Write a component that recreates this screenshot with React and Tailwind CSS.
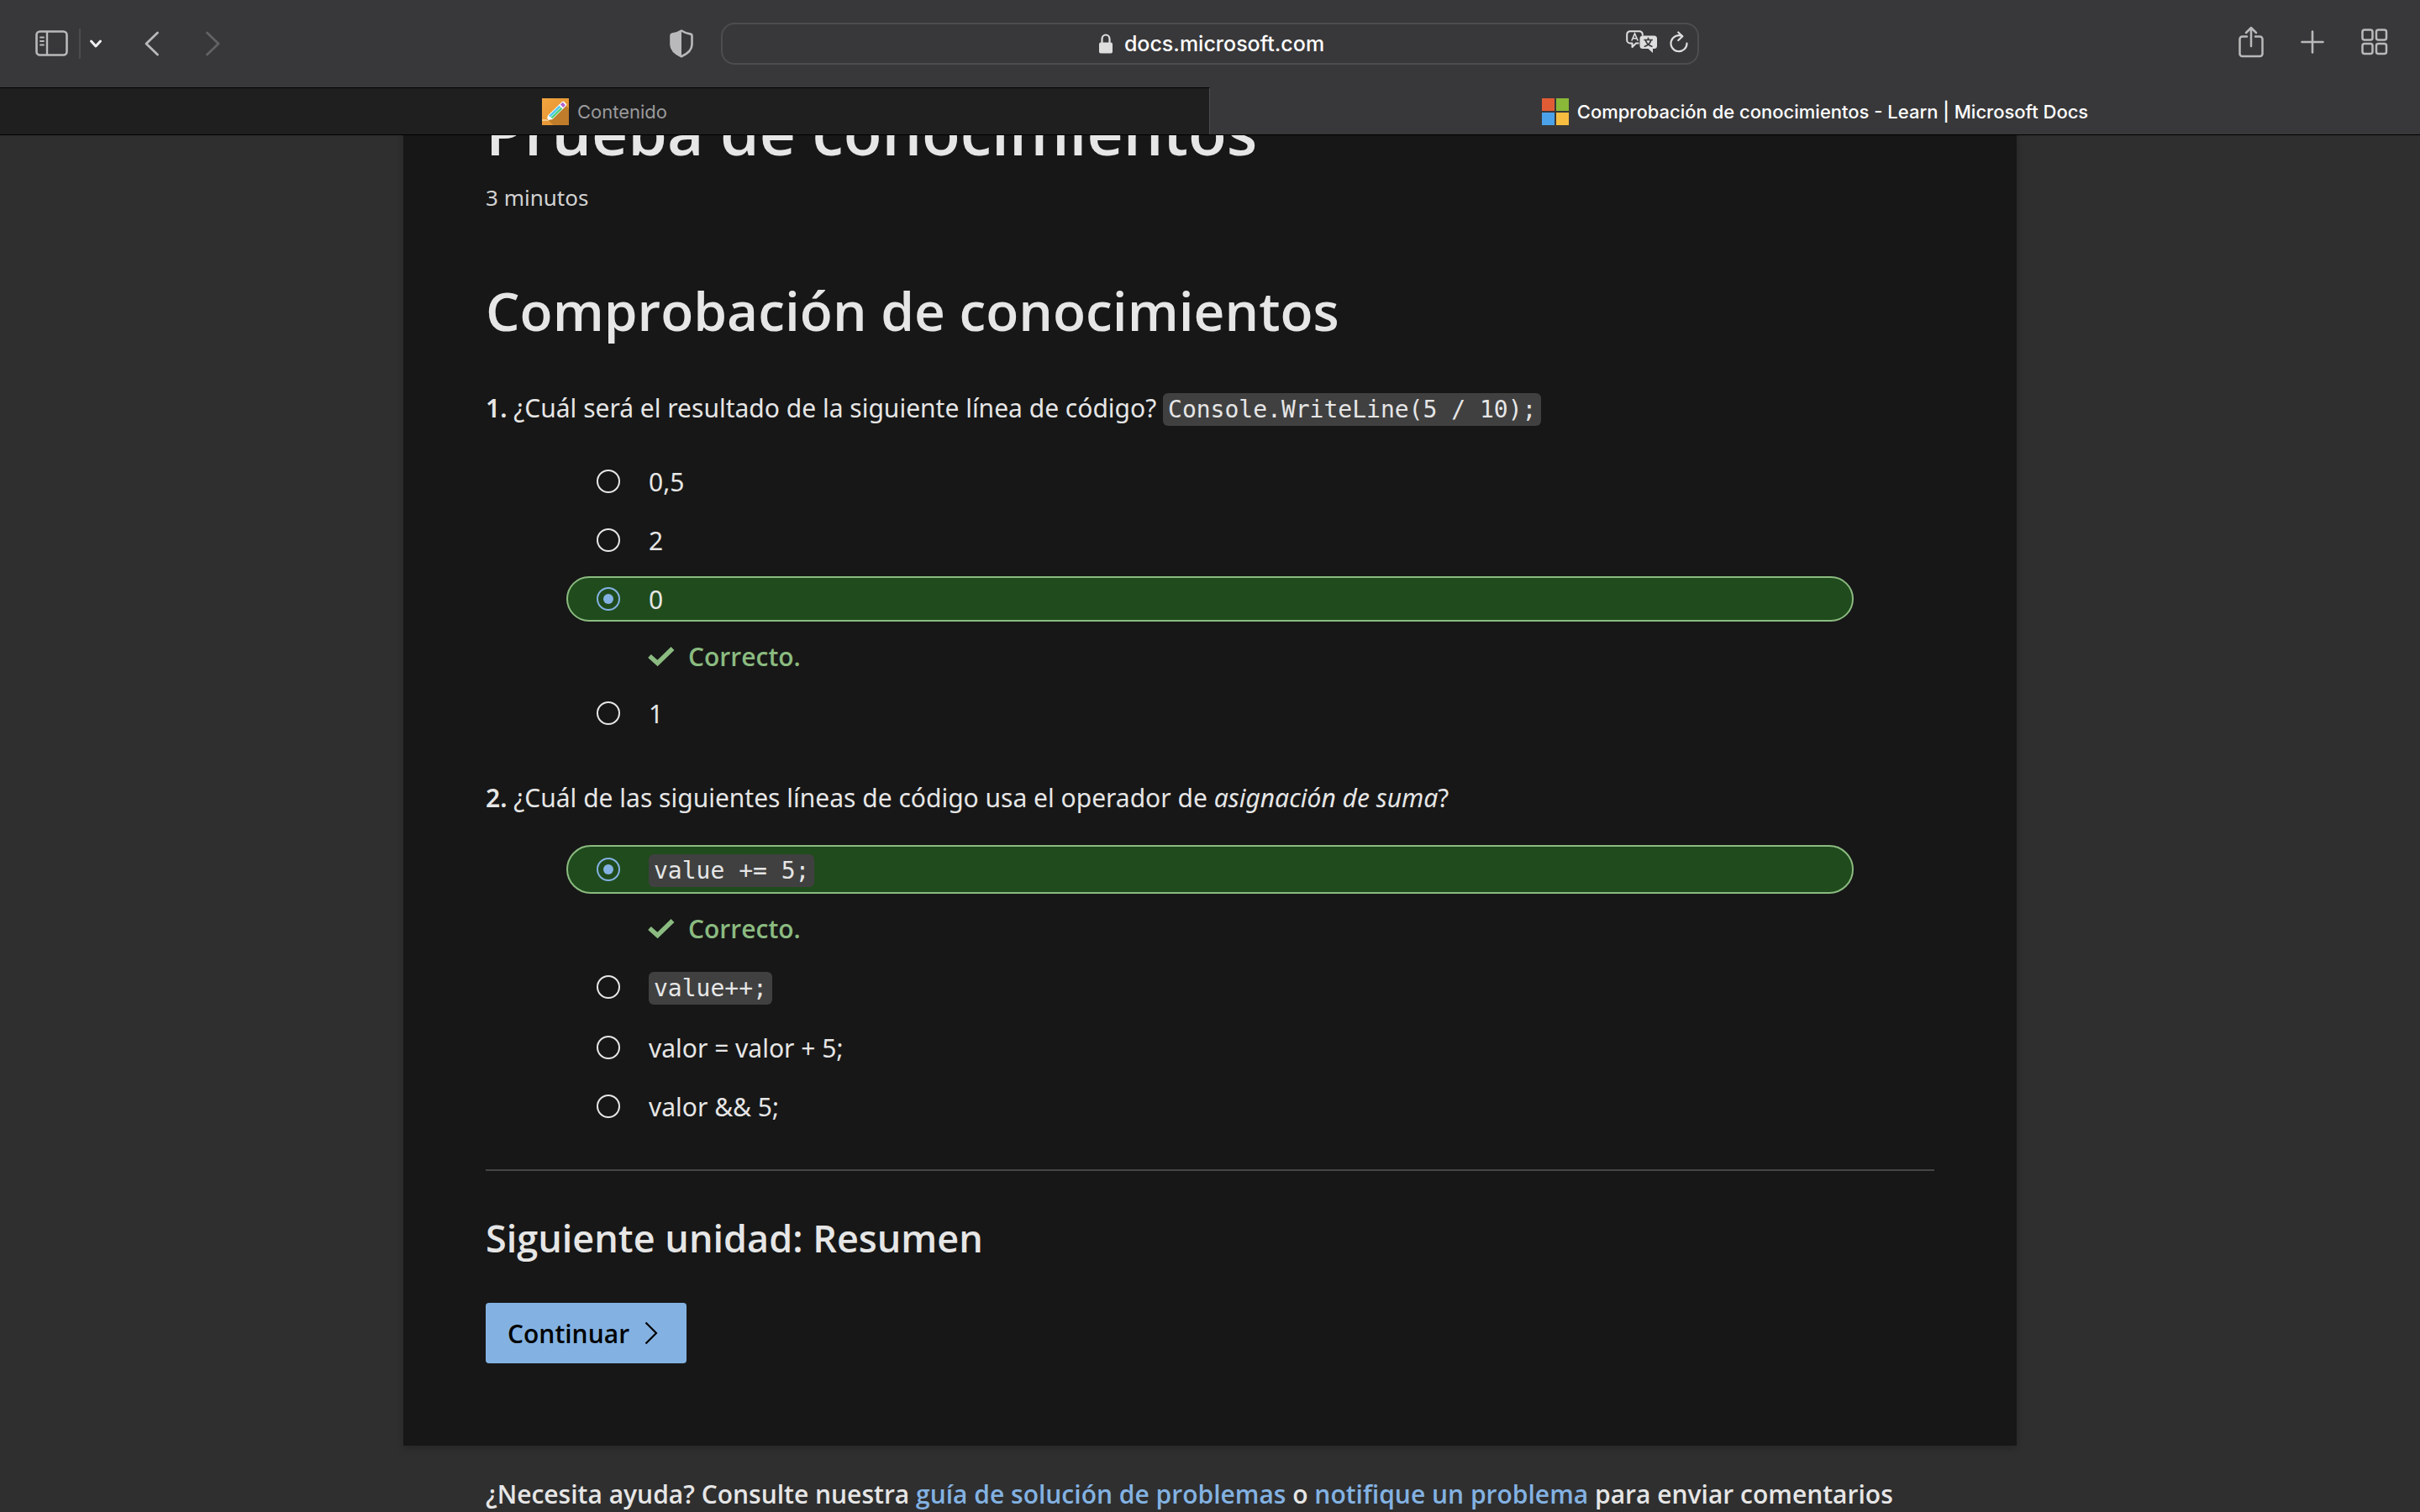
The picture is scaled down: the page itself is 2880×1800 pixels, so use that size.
import React from "react";

const SidebarIcon = () => (
  <svg width="40" height="32" viewBox="0 0 40 32" fill="none" stroke="#b9b9bb" strokeLinecap="round">
    <rect x="1.5" y="1.5" width="36" height="28" rx="4" strokeWidth="2.6" />
    <path d="M14 2v27" strokeWidth="2.4" />
    <path d="M6 8.5h4M6 13h4M6 17.5h4" strokeWidth="1.8" />
  </svg>
);

const SmallChevron = () => (
  <svg width="16" height="12" viewBox="0 0 16 12" fill="none" stroke="#f0f0f0" strokeWidth="3" strokeLinecap="round" strokeLinejoin="round">
    <path d="M2.5 3l5.500 6l5.500 -6" />
  </svg>
);

const BackIcon = () => (
  <svg width="18" height="30" viewBox="0 0 18 30" fill="none" stroke="#b9b9bb" strokeWidth="2.8" strokeLinecap="round" strokeLinejoin="round">
    <path d="M15.500 2L2 15l13.500 13" />
  </svg>
);

const ForwardIcon = () => (
  <svg width="18" height="30" viewBox="0 0 18 30" fill="none" stroke="#626264" strokeWidth="2.8" strokeLinecap="round" strokeLinejoin="round">
    <path d="M2.500 2L16 15L2.500 28" />
  </svg>
);

const ShieldIcon = () => (
  <svg width="28" height="34" viewBox="0 0 28 34">
    <path d="M14 1.500C17 3.500 21 5 25 5.600Q26.500 6 26.500 7.500V18C26.500 25 20 29.500 14 32.300C8 29.500 1.500 25 1.500 18V7.500Q1.500 6 3 5.600C7 5 11 3.500 14 1.500Z" fill="none" stroke="#b9b9bb" strokeWidth="2.6" strokeLinejoin="round" />
    <path d="M14 1.500V32.300C8 29.500 1.500 25 1.500 18V7.500Q1.500 6 3 5.600C7 5 11 3.500 14 1.500Z" fill="#b9b9bb" />
  </svg>
);

const LockIcon = () => (
  <svg width="16" height="24" viewBox="0 0 16 24">
    <path d="M3.500 11V6.500a4.500 5 0 0 1 9 0V11" fill="none" stroke="#dededf" strokeWidth="2.200" />
    <rect x="0" y="10.500" width="16" height="13" rx="2" fill="#dededf" />
  </svg>
);

const TranslateIcon = () => (
  <svg width="38" height="28" viewBox="0 0 38 28" fill="none">
    <path d="M15.500 15.500H12L7.500 20V15.500H5A3.800 3.800 0 0 1 1.200 11.700V5A3.800 3.800 0 0 1 5 1.200H16A3.800 3.800 0 0 1 19.800 5V6.500" stroke="#dededf" strokeWidth="2" strokeLinejoin="round" />
    <path d="M6.800 12.500L10.500 4L14.200 12.500M8 9.800H13" stroke="#dededf" strokeWidth="1.600" />
    <path d="M20 6.500H33.500A3.500 3.500 0 0 1 37 10V18.500A3.500 3.500 0 0 1 33.500 22H32V27L26.500 22H20A3.500 3.500 0 0 1 16.500 18.500V10A3.500 3.500 0 0 1 20 6.500Z" fill="#dededf" />
    <path d="M26.500 8.800V11.300M21.300 11.500H31.900M23.300 11.800C24.300 15.500 27.500 18.300 31.500 19.500M29.900 11.800C28.900 15.500 25.700 18.300 21.700 19.500" stroke="#38383a" strokeWidth="1.700" />
  </svg>
);

const ReloadIcon = () => (
  <svg width="22" height="26" viewBox="0 0 22 26" fill="none" stroke="#dededf" strokeWidth="2.200" strokeLinecap="round" strokeLinejoin="round">
    <path d="M20.500 14.500A9.500 9.500 0 1 1 15 6" />
    <path d="M10.300 1.500L15.300 6.200L10.300 11" />
  </svg>
);

const ShareIcon = () => (
  <svg width="30" height="38" viewBox="0 0 30 38" fill="none" stroke="#b9b9bb" strokeWidth="2.500" strokeLinecap="round" strokeLinejoin="round">
    <path d="M10 12.500H4.500A3 3 0 0 0 1.500 15.500V33A3 3 0 0 0 4.500 36H25.500A3 3 0 0 0 28.500 33V15.500A3 3 0 0 0 25.500 12.500H20" />
    <path d="M15 24V2M9 8L15 2L21 8" />
  </svg>
);

const PlusIcon = () => (
  <svg width="28" height="28" viewBox="0 0 28 28" stroke="#b9b9bb" strokeWidth="2.600" strokeLinecap="round">
    <path d="M14 1.500V26.500M1.500 14H26.500" />
  </svg>
);

const GridIcon = () => (
  <svg width="32" height="32" viewBox="0 0 32 32" fill="none" stroke="#b9b9bb" strokeWidth="2.500">
    <rect x="1.500" y="1.500" width="12" height="12" rx="2.500" />
    <rect x="18" y="1.500" width="12" height="12" rx="2.500" />
    <rect x="1.500" y="18" width="12" height="12" rx="2.500" />
    <rect x="18" y="18" width="12" height="12" rx="2.500" />
  </svg>
);

const PencilFavicon = () => (
  <svg width="32" height="32" viewBox="0 0 32 32">
    <defs>
      <linearGradient id="pencil-bg" x1="0" y1="0" x2="1" y2="1">
        <stop offset="0" stopColor="#f4a540" />
        <stop offset="1" stopColor="#dd8f2e" />
      </linearGradient>
    </defs>
    <rect width="32" height="32" fill="url(#pencil-bg)" />
    <path d="M28.500 9L32 12.500V32H13.500L7 25.500Z" fill="#bf7c2a" />
    <path d="M0 26H8" stroke="#fbd9a4" strokeWidth="1.500" />
    <path d="M24 4Q25 3 26.200 4L28.800 6.600Q29.800 8 28.800 9L12.500 25L5.500 26.500L7 20.500Z" fill="#fff" />
    <path d="M21.800 7.500L24.800 4.800L28 8.200L25.300 11Z" fill="#b265cf" />
    <path d="M20.500 8.500L22.400 10.400L10 22.500L8 20.700Z" fill="#54c8f0" />
    <path d="M22.700 10.700L24.400 12.400L12.300 24.200L10.400 22.800Z" fill="#4fcf78" />
    <path d="M6.200 24.300L7.800 25.600L5.500 26.500Z" fill="#d98a2b" />
  </svg>
);

const MicrosoftFavicon = () => (
  <svg width="32" height="32" viewBox="0 0 32 32">
    <rect width="15" height="15" fill="#e15c35" />
    <rect x="17" width="15" height="15" fill="#8ab838" />
    <rect y="17" width="15" height="15" fill="#4ca2ea" />
    <rect x="17" y="17" width="15" height="15" fill="#f6bd41" />
  </svg>
);

const CheckIcon = () => (
  <svg width="32" height="24" viewBox="0 0 32 24" fill="none" stroke="#8bbb80" strokeWidth="5.500">
    <path d="M2 11L11.500 19.500L29.500 2" />
  </svg>
);

const Code = ({ children }) => (
  <code className="rounded-md bg-[#404040] px-1.5 py-[3px] font-['DejaVu_Sans_Mono',monospace] text-[28px] text-[#e6e6e6]">{children}</code>
);

const questions = [
  {
    id: "q1",
    number: "1.",
    tall: true,
    text: (
      <>
        ¿Cuál será el resultado de la siguiente línea de código? <Code>Console.WriteLine(5 / 10);</Code>
      </>
    ),
    options: [{ text: "0,5" }, { text: "2" }, { text: "0", correct: true }, { text: "1" }],
  },
  {
    id: "q2",
    number: "2.",
    text: (
      <>
        ¿Cuál de las siguientes líneas de código usa el operador de <em>asignación de suma</em>?
      </>
    ),
    options: [
      { text: "value += 5;", code: true, correct: true },
      { text: "value++;", code: true },
      { text: "valor = valor + 5;" },
      { text: "valor && 5;" },
    ],
  },
];

function Option({ group, option }) {
  const tone = option.correct ? "border-[#8bbb80] bg-[#204b1d]" : "border-transparent";
  const height = option.code ? "min-h-[58px]" : "min-h-[54px]";
  return (
    <div>
      <label className={`flex items-center gap-[34px] rounded-full border-2 pl-[34px] ${tone} ${height}`}>
        <input
          type="radio"
          name={group}
          defaultChecked={option.correct}
          className="grid size-7 shrink-0 appearance-none place-items-center rounded-full border-2 border-[#e6e6e6] before:size-3 before:rounded-full checked:border-[#83b2e2] checked:before:bg-[#83b2e2]"
        />
        <span className="pt-0.5 leading-10">{option.code ? <Code>{option.text}</Code> : option.text}</span>
      </label>
      {option.correct && (
        <p className="mt-[18px] flex items-center gap-4 pl-[97px] font-['Open_Sans',sans-serif] font-semibold leading-[48px] text-[#8bbb80]">
          <CheckIcon />
          Correcto.
        </p>
      )}
    </div>
  );
}

function Toolbar() {
  return (
    <div className="grid h-[104px] grid-cols-[1fr_minmax(0,1164px)_1fr] items-center">
      <div className="flex items-center pl-[42px] pr-[33px]">
        <button aria-label="Barra lateral"><SidebarIcon /></button>
        <span className="ml-3 h-9 w-0.5 bg-[#4c4c4e]" />
        <button aria-label="Grupos de pestañas" className="ml-2.5"><SmallChevron /></button>
        <button aria-label="Atrás" className="ml-[50px]"><BackIcon /></button>
        <button aria-label="Adelante" className="ml-[54px]"><ForwardIcon /></button>
        <button aria-label="Privacidad" className="ml-auto"><ShieldIcon /></button>
      </div>
      <div className="grid h-[50px] grid-cols-[1fr_auto_1fr] items-center rounded-2xl border-2 border-[#4d4d4f]">
        <button className="col-start-2 flex items-center gap-3.5 pl-1 text-[25px] font-medium leading-8 text-white">
          <LockIcon />
          docs.microsoft.com
        </button>
        <div className="flex items-center justify-end gap-3.5 pb-1 pr-[11px]">
          <button aria-label="Traducir"><TranslateIcon /></button>
          <button aria-label="Recargar"><ReloadIcon /></button>
        </div>
      </div>
      <div className="flex items-center justify-end gap-11 pb-1 pr-[38px]">
        <button aria-label="Compartir"><ShareIcon /></button>
        <button aria-label="Nueva pestaña"><PlusIcon /></button>
        <button aria-label="Vista de pestañas"><GridIcon /></button>
      </div>
    </div>
  );
}

function Tabs() {
  return (
    <div role="tablist" className="grid grid-cols-2 border-b border-black text-[22px] leading-7">
      <button role="tab" aria-selected="false" className="flex h-14 items-center justify-center gap-2.5 border-r border-t border-r-[#4c4c4e] border-t-black bg-[#1f1f20] text-[#9a9a9b]">
        <PencilFavicon />
        Contenido
      </button>
      <button role="tab" aria-selected="true" className="flex h-14 items-center justify-center gap-2.5 border-t border-t-transparent font-medium text-white">
        <MicrosoftFavicon />
        Comprobación de conocimientos - Learn | Microsoft Docs
      </button>
    </div>
  );
}

export default function App() {
  return (
    <div className="flex h-screen flex-col overflow-hidden bg-[#2f2f2f] font-['Noto_Sans',sans-serif] text-[30px] text-[#e6e6e6]">
      <header className="shrink-0 bg-[#38383a] font-['Inter',sans-serif] [&_button]:shrink-0">
        <Toolbar />
        <Tabs />
      </header>
      <div className="min-h-0 flex-1 overflow-hidden">
        <main className="-mt-[53px] mx-auto flex w-2/3 flex-col bg-[#171717] px-[98px] pb-[98px] shadow-[0_3px_8px_rgba(0,0,0,0.2)]">
          <h1 className="font-['Open_Sans',sans-serif] text-[75px] font-semibold leading-[96px]">Prueba de conocimientos</h1>
          <p className="mt-[13px] text-[26px] leading-9 text-[#d2d2d2]">3 minutos</p>
          <h2 className="mt-[77px] font-['Open_Sans',sans-serif] text-[64px] font-semibold leading-[80px]">Comprobación de conocimientos</h2>
          {questions.map((q) => (
            <section key={q.id} role="radiogroup" aria-labelledby={q.id} className="mt-[50px]">
              <p id={q.id} className={q.tall ? "leading-[52px]" : "leading-[48px]"}>
                <strong className="font-semibold">{q.number}</strong> {q.text}
              </p>
              <div className="mt-8 flex flex-col gap-4 px-24">
                {q.options.map((o) => (
                  <Option key={o.text} group={q.id} option={o} />
                ))}
              </div>
            </section>
          ))}
          <hr className="mt-12 border-t-2 border-[#464646]" />
          <h3 className="mt-[50px] font-['Open_Sans',sans-serif] text-[45px] font-semibold leading-[60px]">Siguiente unidad: Resumen</h3>
          <button className="mt-[47px] flex h-[72px] items-center gap-[18px] self-start rounded bg-[#83b2e2] pl-[26px] pr-[34px] font-['Open_Sans',sans-serif] font-semibold text-black">
            Continuar
            <svg width="16" height="28" viewBox="0 0 16 28" fill="none" stroke="#000" strokeWidth="2.200">
              <path d="M1.500 1.500L14 14L1.500 26.500" />
            </svg>
          </button>
        </main>
        <p className="mx-auto mt-[34px] w-2/3 px-[98px] font-['Open_Sans',sans-serif] font-semibold leading-[48px]">
          ¿Necesita ayuda? Consulte nuestra <a href="#guia" className="text-[#83b2e2]">guía de solución de problemas</a> o{" "}
          <a href="#problema" className="text-[#83b2e2]">notifique un problema</a> para enviar comentarios
        </p>
      </div>
    </div>
  );
}
